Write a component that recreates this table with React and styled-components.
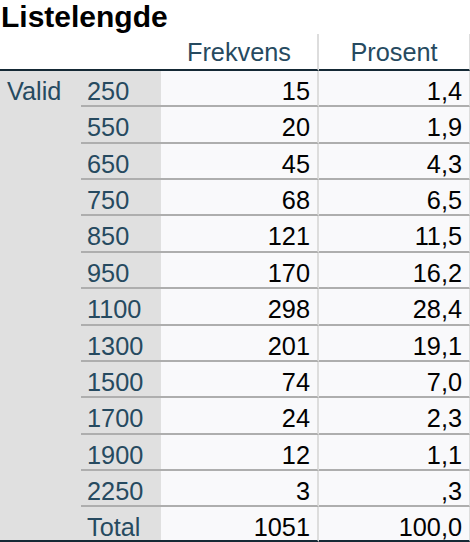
import React from 'react';
import styled, { createGlobalStyle } from 'styled-components';

const GlobalStyle = createGlobalStyle`
  body {
    margin: 0;
    background: #fff;
    overflow: hidden;
    font-family: "Liberation Sans", Arial, sans-serif;
  }
`;

const rows = [
  ['250', '15', '1,4'],
  ['550', '20', '1,9'],
  ['650', '45', '4,3'],
  ['750', '68', '6,5'],
  ['850', '121', '11,5'],
  ['950', '170', '16,2'],
  ['1100', '298', '28,4'],
  ['1300', '201', '19,1'],
  ['1500', '74', '7,0'],
  ['1700', '24', '2,3'],
  ['1900', '12', '1,1'],
  ['2250', '3', ',3'],
  ['Total', '1051', '100,0'],
];

const Title = styled.div`
  font-size: 30px;
  font-weight: bold;
  line-height: 34px;
  height: 34px;
  padding-left: 1px;
  color: #000;
`;

const Table = styled.div`
  display: grid;
  grid-template-columns: 81px 80px 158px 151px;
  font-size: 25.3px;
`;

const Corner = styled.div`
  grid-column: 1 / span 2;
  border-bottom: 2px solid #152935;
`;

const HeadCell = styled.div`
  box-sizing: border-box;
  height: 37px;
  padding-top: 1px;
  line-height: 34px;
  text-align: center;
  color: #264a60;
  border-bottom: 2px solid #152935;
  border-right: ${(p) => (p.$edge ? '1px' : '2px')} solid #dddddd;
`;

const LabelCell = styled.div`
  grid-column: 1;
  grid-row: 2 / span ${(p) => p.$span};
  background: #e0e0e0;
  color: #264a60;
  padding: 3px 0 0 7px;
  line-height: 34px;
  border-bottom: 2px solid #152935;
`;

const Cell = styled.div`
  box-sizing: border-box;
  height: ${(p) => (p.$last ? '35px' : '36.36px')};
  padding-top: 3px;
  line-height: 34px;
  border-bottom: 2px solid ${(p) => (p.$last ? '#152935' : '#aeaeae')};
`;

const ValueCell = styled(Cell)`
  grid-column: 2;
  background: #e0e0e0;
  color: #264a60;
  padding-left: 6px;
`;

const DataCell = styled(Cell)`
  background: #f9f9fb;
  color: #010101;
  text-align: right;
  padding-right: 7px;
  border-right: ${(p) => (p.$edge ? '1px' : '2px')} solid #dddddd;
`;

export default function App() {
  return (
    <>
      <GlobalStyle />
      <Title>Listelengde</Title>
      <Table>
        <Corner />
        <HeadCell>Frekvens</HeadCell>
        <HeadCell $edge>Prosent</HeadCell>
        <LabelCell $span={rows.length}>Valid</LabelCell>
        {rows.map(([value, freq, pct], i) => {
          const last = i === rows.length - 1;
          return (
            <React.Fragment key={value}>
              <ValueCell $last={last}>{value}</ValueCell>
              <DataCell $last={last}>{freq}</DataCell>
              <DataCell $last={last} $edge>{pct}</DataCell>
            </React.Fragment>
          );
        })}
      </Table>
    </>
  );
}
